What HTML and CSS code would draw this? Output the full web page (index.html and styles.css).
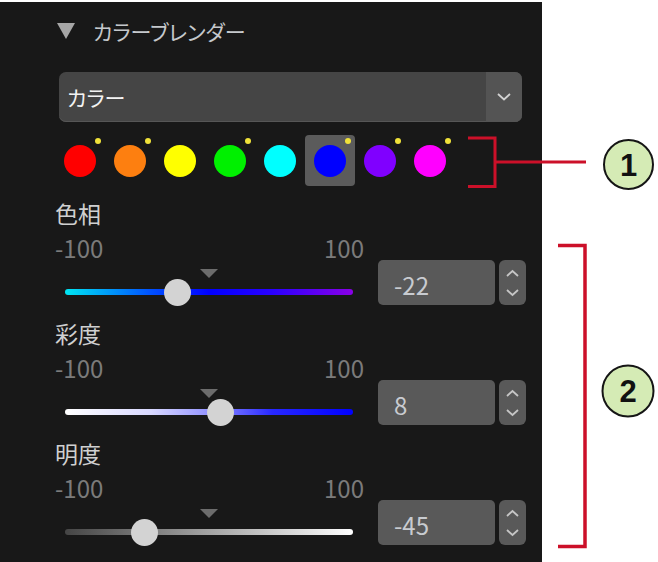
FILE: index.html
```html
<!DOCTYPE html>
<html lang="ja">
<head>
<meta charset="utf-8">
<link rel="stylesheet" href="styles.css">
</head>
<body>
<div class="panel">
  <div class="title">
    <svg class="tri" width="18" height="16" viewBox="0 0 18 16"><polygon points="0,0 18,0 9,16" fill="#a6a6a6"/></svg>
    <span class="title-text">カラーブレンダー</span>
  </div>
  <div class="select">
    <span class="select-text">カラー</span>
    <span class="select-btn"><svg width="14" height="8" viewBox="0 0 14 8"><polyline points="1,1 7,6.5 13,1" fill="none" stroke="#d2d2d2" stroke-width="1.8"/></svg></span>
  </div>
  <div class="swatches">
    <div class="swatch"><span class="circle c-red"></span><span class="badge"></span></div>
    <div class="swatch"><span class="circle c-orange"></span><span class="badge"></span></div>
    <div class="swatch"><span class="circle c-yellow"></span></div>
    <div class="swatch"><span class="circle c-green"></span><span class="badge"></span></div>
    <div class="swatch"><span class="circle c-cyan"></span></div>
    <div class="swatch sel"><span class="circle c-blue"></span><span class="badge"></span></div>
    <div class="swatch"><span class="circle c-purple"></span><span class="badge"></span></div>
    <div class="swatch"><span class="circle c-magenta"></span><span class="badge"></span></div>
  </div>

  <div class="sec first">
    <div class="label">色相</div>
    <div class="range"><span>-100</span><span>100</span></div>
    <div class="slider">
      <div class="track hue">
        <span class="marker"></span>
        <span class="thumb" style="left:39%"></span>
      </div>
    </div>
    <div class="numbox">-22</div>
    <div class="spin"><svg width="27" height="45" viewBox="0 0 27 45"><polyline points="8,16 13.5,11 19,16" fill="none" stroke="#c6c6c6" stroke-width="1.8"/><polyline points="8,30 13.5,35 19,30" fill="none" stroke="#c6c6c6" stroke-width="1.8"/></svg></div>
  </div>

  <div class="sec">
    <div class="label">彩度</div>
    <div class="range"><span>-100</span><span>100</span></div>
    <div class="slider">
      <div class="track sat">
        <span class="marker"></span>
        <span class="thumb" style="left:54%"></span>
      </div>
    </div>
    <div class="numbox">8</div>
    <div class="spin"><svg width="27" height="45" viewBox="0 0 27 45"><polyline points="8,16 13.5,11 19,16" fill="none" stroke="#c6c6c6" stroke-width="1.8"/><polyline points="8,30 13.5,35 19,30" fill="none" stroke="#c6c6c6" stroke-width="1.8"/></svg></div>
  </div>

  <div class="sec">
    <div class="label">明度</div>
    <div class="range"><span>-100</span><span>100</span></div>
    <div class="slider">
      <div class="track bri">
        <span class="marker"></span>
        <span class="thumb" style="left:27.5%"></span>
      </div>
    </div>
    <div class="numbox">-45</div>
    <div class="spin"><svg width="27" height="45" viewBox="0 0 27 45"><polyline points="8,16 13.5,11 19,16" fill="none" stroke="#c6c6c6" stroke-width="1.8"/><polyline points="8,30 13.5,35 19,30" fill="none" stroke="#c6c6c6" stroke-width="1.8"/></svg></div>
  </div>
</div>

<svg class="callouts" width="658" height="562" viewBox="0 0 658 562">
  <path d="M468 138 H495 V186.5 H468" fill="none" stroke="#cc1029" stroke-width="3"/>
  <path d="M495 162 H586" fill="none" stroke="#cc1029" stroke-width="3"/>
  <circle cx="628.5" cy="164.5" r="24.5" fill="#d5ebb5" stroke="#151515" stroke-width="2"/>
  <text x="628.5" y="175.5" text-anchor="middle" class="num">1</text>
  <path d="M558 245.5 H585 V546.5 H558" fill="none" stroke="#cc1029" stroke-width="3.5"/>
  <circle cx="628" cy="391" r="25.5" fill="#d5ebb5" stroke="#151515" stroke-width="2"/>
  <text x="628" y="402" text-anchor="middle" class="num">2</text>
</svg>
</body>
</html>
```

FILE: styles.css
```css
html, body {
  margin: 0;
  padding: 0;
}

body {
  width: 658px;
  height: 562px;
  background: #ffffff;
  position: relative;
  overflow: hidden;
  font-family: "Noto Sans CJK JP", "Noto Sans", sans-serif;
}

.panel {
  width: 542px;
  height: 560px;
  margin-top: 2px;
  background: #181818;
  padding: 9px 0 0 55px;
  box-sizing: border-box;
  overflow: hidden;
}

.title {
  display: flex;
  align-items: center;
  height: 40px;
}

.tri {
  margin-left: 2px;
  display: block;
}

.title-text {
  margin-left: 18px;
  font-size: 21px;
  line-height: 40px;
  color: #c5c8cc;
  font-feature-settings: "palt";
}

.select {
  margin: 21px 0 0 4px;
  width: 463px;
  height: 50px;
  display: flex;
  border-radius: 7px;
  overflow: hidden;
  background: #454545;
  box-shadow: inset 0 -1px 0 #565656;
}

.select-text {
  flex: 1;
  padding-left: 8px;
  line-height: 50px;
  font-size: 21px;
  color: #f2f2f2;
  font-feature-settings: "palt";
}

.select-btn {
  width: 36px;
  background: #545454;
  display: flex;
  align-items: center;
  justify-content: center;
}

.swatches {
  display: flex;
  margin-top: 13px;
  height: 51px;
}

.swatch {
  width: 50px;
  height: 51px;
  position: relative;
  display: flex;
  align-items: center;
  justify-content: center;
  border-radius: 4px;
}

.swatch.sel {
  background: #5b5b5b;
}

.circle {
  width: 32px;
  height: 32px;
  border-radius: 50%;
}

.c-red { background: #ff0000; }
.c-orange { background: #fd7f10; }
.c-yellow { background: #ffff00; }
.c-green { background: #00f000; }
.c-cyan { background: #00ffff; }
.c-blue { background: #0000ff; }
.c-purple { background: #8000ff; }
.c-magenta { background: #ff00ff; }

.badge {
  position: absolute;
  left: 40px;
  top: 3px;
  width: 6px;
  height: 6px;
  border-radius: 50%;
  background: #f0e23a;
}

.sec {
  display: grid;
  grid-template-columns: 323px 121px 27px;
  grid-template-rows: 38px 24px 45px 13px;
  height: 120px;
}

.sec.first {
  margin-top: 12px;
}

.label {
  grid-column: 1 / -1;
  grid-row: 1;
  font-size: 23px;
  line-height: 30px;
  color: #d0d0d0;
}

.range {
  grid-column: 1;
  grid-row: 2;
  display: flex;
  justify-content: space-between;
  padding-right: 14px;
  font-size: 24px;
  line-height: 24px;
  color: #7b7b7b;
}

.slider {
  grid-column: 1;
  grid-row: 3;
}

.track {
  position: relative;
  margin: 29px 25px 0 10px;
  height: 6px;
  border-radius: 3px;
}

.hue {
  background: linear-gradient(to right, #00e6f2 0%, #0050ff 30%, #0000ff 50%, #2a00ff 72%, #8a00e6 100%);
}

.sat {
  background: linear-gradient(to right, #ffffff 0%, #d8d8ff 30%, #8c8cff 52%, #2828ff 72%, #0000ff 100%);
}

.bri {
  background: linear-gradient(to right, #454545 0%, #9a9a9a 45%, #ffffff 100%);
}

.marker {
  position: absolute;
  left: calc(50% - 9.5px);
  top: -20px;
  width: 0;
  height: 0;
  border-left: 9.5px solid transparent;
  border-right: 9.5px solid transparent;
  border-top: 9px solid #6c6c6c;
}

.thumb {
  position: absolute;
  top: -10.5px;
  width: 27px;
  height: 27px;
  margin-left: -13.5px;
  border-radius: 50%;
  background: #d3d3d3;
}

.numbox {
  grid-column: 2;
  grid-row: 3;
  width: 117px;
  height: 45px;
  box-sizing: border-box;
  padding: 5px 0 0 16px;
  background: #595959;
  border-radius: 5px;
  font-size: 24px;
  line-height: 40px;
  color: #c8cbd0;
}

.spin {
  grid-column: 3;
  grid-row: 3;
  height: 45px;
  background: #595959;
  border-radius: 6px;
}

.spin svg {
  display: block;
}

.callouts {
  position: absolute;
  left: 0;
  top: 0;
  pointer-events: none;
}

.num {
  font-family: "Liberation Sans", Arial, sans-serif;
  font-weight: bold;
  font-size: 31px;
  fill: #111111;
}
```
